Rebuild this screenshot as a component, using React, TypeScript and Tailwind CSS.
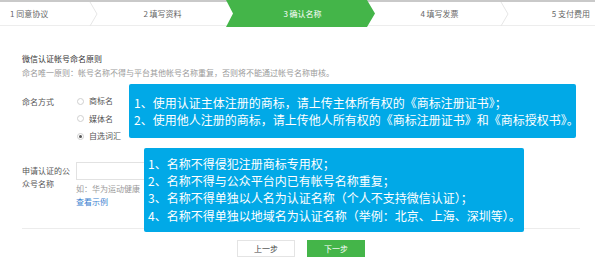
import React from "react";

const font = { fontFamily: '"Noto Sans CJK SC", "Noto Sans", sans-serif' };

function Radio({ checked, label }: { checked?: boolean; label: string }) {
  return (
    <div className="flex items-center h-[17.5px]">
      <span className="ml-[0.5px] w-[7px] h-[7px] rounded-full border border-[#cfcfcf] bg-white flex items-center justify-center">
        {checked && <span className="w-[3px] h-[3px] rounded-full bg-[#555]" />}
      </span>
      <span className="ml-[5.5px] text-[8px] text-[#555]">{label}</span>
    </div>
  );
}

export default function App() {
  return (
    <div className="relative w-[595px] h-[269px] bg-white overflow-hidden" style={font}>
      {/* step bar */}
      <div className="relative flex h-[26px] border-t-2 border-[#c9c9c9] border-b border-b-[#ededed] text-[8px] text-[#666]">
        <div className="w-[93px] flex items-center pl-[10px]">1 同意协议</div>
        <div className="w-[133px] flex items-center justify-center pl-[6px]">2 填写资料</div>
        <div className="relative z-10 w-[149px] mr-[-8px] -mt-[2px] h-[27px] bg-[#44b549] text-white flex items-center justify-center pl-[4px] [clip-path:polygon(0_0,141px_0,149px_50%,141px_100%,0_100%,7px_50%)]">
          3 确认名称
        </div>
        <div className="w-[135px] flex items-center justify-center pl-[10px]">4 填写发票</div>
        <div className="flex-1 flex items-center justify-end pr-[5px]">5 支付费用</div>
        <svg className="absolute left-[89px] top-0" width="10" height="24" viewBox="0 0 10 24">
          <polyline points="1,0 8,12 1,24" fill="none" stroke="#e6e6e6" strokeWidth="1" />
        </svg>
        <svg className="absolute left-[500px] top-0" width="10" height="24" viewBox="0 0 10 24">
          <polyline points="1,0 8,12 1,24" fill="none" stroke="#e6e6e6" strokeWidth="1" />
        </svg>
      </div>

      <div className="pl-[22px] pr-[15px]">
        <div className="mt-[26px] text-[8px] leading-[14px] text-[#333]">微信认证帐号命名原则</div>
        <div className="text-[8px] leading-[14px] text-[#9a9a9a]">
          命名唯一原则：帐号名称不得与平台其他帐号名称重复，否则将不能通过帐号名称审核。
        </div>

        <div className="mt-[12.5px] flex">
          <div className="w-[54px] text-[8px] leading-[17.5px] text-[#555]">命名方式</div>
          <div className="flex flex-col">
            <Radio label="商标名" />
            <Radio label="媒体名" />
            <Radio checked label="自选词汇" />
          </div>
        </div>

        <div className="mt-[17px] flex">
          <div className="w-[54px] pt-[1.5px] text-[8px] leading-[13px] text-[#555]">
            申请认证的公<br />众号名称
          </div>
          <div className="flex flex-col">
            <div className="w-[110px] h-[18px] border border-[#e2e2e2] bg-white" />
            <div className="mt-[3px] text-[8px] leading-[12px] text-[#9a9a9a]">如：华为运动健康</div>
            <div className="text-[8px] leading-[13px] text-[#3b7fd0]">查看示例</div>
          </div>
        </div>

        <div className="mt-[20px] w-[558px] border-t border-[#ececec]">
          <div className="mt-[11px] flex justify-center gap-[12px]">
            <button className="w-[58px] h-[17px] border border-[#e4e4e4] bg-white text-[8px] text-[#444]">上一步</button>
            <button className="w-[58px] h-[17px] bg-[#44b549] text-[8px] text-white">下一步</button>
          </div>
        </div>
      </div>

      {/* tooltip 1 */}
      <div className="absolute left-[129px] top-[84px] w-[447px] h-[54px] rounded-[2px] bg-[#01a9e7] text-white text-[12px] leading-[17px] pl-[5px] pt-[10px] whitespace-nowrap">
        <div>1、使用认证主体注册的商标，请上传主体所有权的《商标注册证书》；</div>
        <div>2、使用他人注册的商标，请上传他人所有权的《商标注册证书》和《商标授权书》。</div>
      </div>

      {/* tooltip 2 */}
      <div className="absolute left-[144px] top-[148px] w-[380px] h-[84px] rounded-[2px] bg-[#01a9e7] text-white text-[12px] leading-[17.2px] pl-[4px] pt-[7px] whitespace-nowrap">
        <div>1、名称不得侵犯注册商标专用权；</div>
        <div>2、名称不得与公众平台内已有帐号名称重复；</div>
        <div>3、名称不得单独以人名为认证名称（个人不支持微信认证）；</div>
        <div>4、名称不得单独以地域名为认证名称（举例：北京、上海、深圳等）。</div>
      </div>
    </div>
  );
}
